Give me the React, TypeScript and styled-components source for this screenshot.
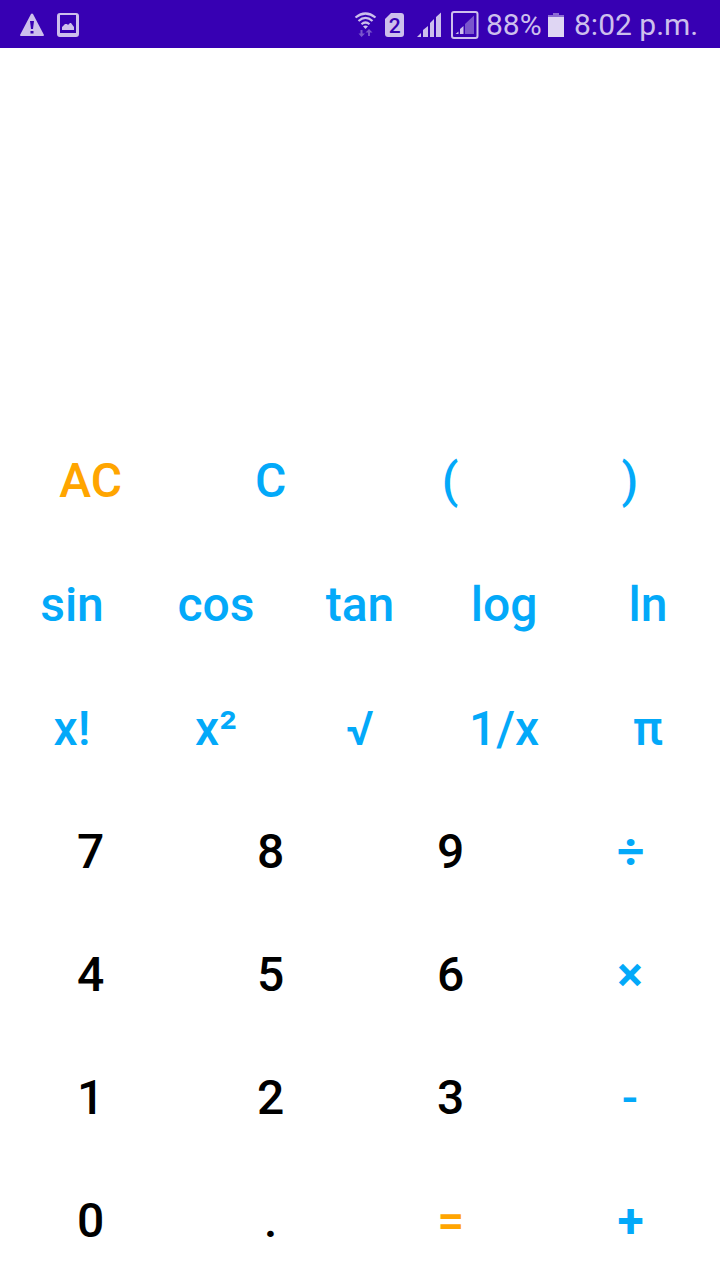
import React from "react";
import styled, { createGlobalStyle } from "styled-components";

const GlobalStyle = createGlobalStyle`
  * { box-sizing: border-box; }
  body { margin: 0; background: #fff; font-family: Roboto, sans-serif; }
`;

const Screen = styled.main`
  display: flex;
  flex-direction: column;
  width: 720px;
  height: 1280px;
  overflow: hidden;
`;

const StatusBar = styled.header`
  display: flex;
  align-items: center;
  flex: none;
  height: 48px;
  background: #3700b3;
  color: #cdbfec;
`;

const IconStrip = styled.svg`
  display: block;
  flex: none;
`;

const Spacer = styled.div`
  flex: 1;
`;

const BatteryIcon = styled(IconStrip)`
  margin-right: 10px;
  color: #dfd6f3;
`;

const StatusText = styled.span<{ $width: number }>`
  width: ${(p) => p.$width}px;
  font-size: 30px;
  line-height: 48px;
  padding-top: 2px;
  white-space: nowrap;
`;

const Display = styled.section`
  flex: none;
  height: 371px;
`;

const Keypad = styled.section`
  display: flex;
  flex-direction: column;
`;

const KeyRow = styled.div<{ $height: number; $columns: number }>`
  display: grid;
  grid-template-columns: repeat(${(p) => p.$columns}, minmax(0, 1fr));
  height: ${(p) => p.$height}px;
`;

const Key = styled.button<{ $tone: Tone; $heavy: boolean; $indent: number }>`
  padding: 0 0 0 ${(p) => p.$indent}px;
  border: 0;
  background: none;
  font: ${(p) => (p.$heavy ? 700 : 500)} 48px/56px Roboto, sans-serif;
  color: ${(p) => tones[p.$tone]};
`;

const tones = { digit: "#000000", op: "#03a9f9", accent: "#ffa500" };
type Tone = keyof typeof tones;

const accents = ["AC", "="];
const heavyKeys = ["÷", "×", "+"];
const centeredKeys = ["(", ")", "×", "-"];
const toneOf = (k: string): Tone =>
  accents.includes(k) ? "accent" : /^[0-9.]$/.test(k) ? "digit" : "op";

const rows: { height: number; keys: string[] }[] = [
  { height: 124, keys: ["AC", "C", "(", ")"] },
  { height: 124, keys: ["sin", "cos", "tan", "log", "ln"] },
  { height: 123, keys: ["x!", "x²", "√", "1/x", "π"] },
  { height: 123, keys: ["7", "8", "9", "÷"] },
  { height: 123, keys: ["4", "5", "6", "×"] },
  { height: 123, keys: ["1", "2", "3", "-"] },
  { height: 123, keys: ["0", ".", "=", "+"] },
];

export default function App() {
  return (
    <Screen>
      <GlobalStyle />
      <StatusBar>
        <IconStrip width="100" height="48" fill="currentColor">
          <path fillRule="evenodd" d="M31 14Q32 13 33 14L44 35Q44 36 43 36H21Q20 36 20 35ZM30 21L31 29H33L34 21ZM30.500 31V33.500H33.500V31Z" />
          <path fillRule="evenodd" d="M60 13H76Q79 13 79 16V34Q79 37 76 37H60Q57 37 57 34V16Q57 13 60 13ZM60 15V33H76V15Z" />
          <path d="M62 30V27L65 24H67L68 25L70 23H71L74 27V30Z" />
        </IconStrip>
        <Spacer />
        <IconStrip width="136" height="48" viewBox="350 0 136 48" fill="currentColor">
          <g fill="none" stroke="currentColor" strokeWidth="2.200">
            <path d="M355.500 17.500Q365.500 9.500 375.500 17.500" />
            <path d="M358.500 21Q365.500 14.800 372.500 21" />
            <path d="M361.500 24.300Q365.500 20.700 369.500 24.300" />
          </g>
          <path d="M363 26.300Q365.500 24.500 368 26.300L365.500 29Z" />
          <path opacity=".45" d="M360.500 30H362.500V33.500H365L361.500 37L358.500 33.500H360.500ZM368 36V32.500H365.500L369 29L372.500 32.500H370V36Z" />
          <path fillRule="evenodd" d="M391 13H401Q404 13 404 16V34Q404 37 401 37H388Q385 37 385 34V19Z" />
          <text x="394.700" y="33" textAnchor="middle" fontFamily="Roboto, sans-serif" fontSize="21" fontWeight="500" fill="#3700b3">2</text>
          <path d="M417 37L421 33V37ZM423 37V30L428 26V37ZM430 37V23L434 19V37ZM436 37V17L441 12.500V37Z" />
          <rect x="452" y="12" width="25.500" height="26" rx="2" fill="none" stroke="currentColor" strokeWidth="2" />
          <path d="M455.500 34L458.500 31.500V34ZM460 34V29L463.500 26V34Z" />
          <path opacity=".45" d="M465 34V24L474 15.500V34Z" />
        </IconStrip>
        <StatusText $width={62}>88%</StatusText>
        <BatteryIcon width="16" height="48" fill="currentColor">
          <path opacity=".5" d="M0 15H5V13H11V15H16V18H0Z" />
          <path d="M0 17H16V37H0Z" />
        </BatteryIcon>
        <StatusText $width={146}>8:02 p.m.</StatusText>
      </StatusBar>
      <Display />
      <Keypad>
        {rows.map((r) => (
          <KeyRow key={r.keys[0]} $height={r.height} $columns={r.keys.length}>
            {r.keys.map((k) => (
              <Key
                key={k}
                $tone={toneOf(k)}
                $heavy={heavyKeys.includes(k)}
                $indent={r.keys.length === 5 || centeredKeys.includes(k) ? 0 : 1.4}
              >
                {k}
              </Key>
            ))}
          </KeyRow>
        ))}
      </Keypad>
    </Screen>
  );
}
